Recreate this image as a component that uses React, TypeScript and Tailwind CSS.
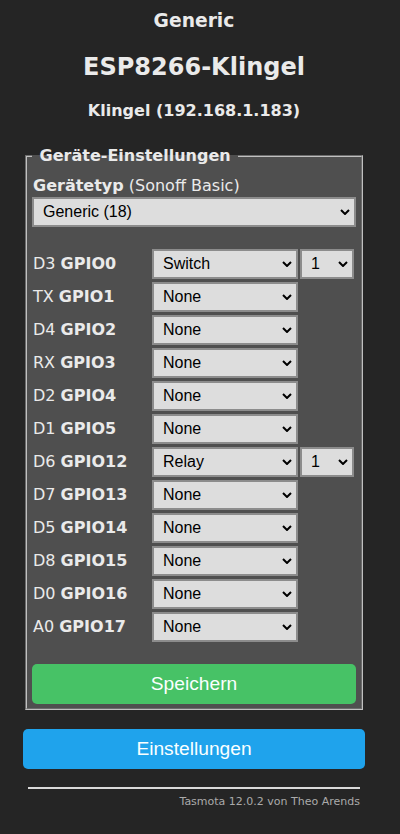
const gpios = [
  { pin: 'D3', name: 'GPIO0', value: 'Switch', index: '1' },
  { pin: 'TX', name: 'GPIO1', value: 'None' },
  { pin: 'D4', name: 'GPIO2', value: 'None' },
  { pin: 'RX', name: 'GPIO3', value: 'None' },
  { pin: 'D2', name: 'GPIO4', value: 'None' },
  { pin: 'D1', name: 'GPIO5', value: 'None' },
  { pin: 'D6', name: 'GPIO12', value: 'Relay', index: '1' },
  { pin: 'D7', name: 'GPIO13', value: 'None' },
  { pin: 'D5', name: 'GPIO14', value: 'None' },
  { pin: 'D8', name: 'GPIO15', value: 'None' },
  { pin: 'D0', name: 'GPIO16', value: 'None' },
  { pin: 'A0', name: 'GPIO17', value: 'None' },
];

const functions = ['None', 'Switch', 'Button', 'Relay', 'Led'];

// Native select, arrow drawn on top so it looks the same everywhere
const Select = ({ value, options, className }: { value: string; options: string[]; className: string }) => (
  <div className={`relative h-[30px] ${className}`}>
    <select
      defaultValue={value}
      className="h-full w-full appearance-none border-2 border-[#8c8c8c] bg-[#dddddd] pl-[9px] pr-5 text-[16px] text-black outline-none font-['Liberation_Sans',Arial,sans-serif]"
    >
      {options.map((o) => (
        <option key={o} value={o}>
          {o}
        </option>
      ))}
    </select>
    <svg
      className="pointer-events-none absolute right-[6px] top-1/2 -translate-y-1/2"
      width="10"
      height="6"
      viewBox="0 0 10 6"
      fill="none"
    >
      <path d="M1 1l4 4 4-4" stroke="#000" strokeWidth="2" />
    </svg>
  </div>
);

export default function App() {
  return (
    <div className="min-h-[834px] bg-[#252525] pl-[23px] text-[#eaeaea] font-['DejaVu_Sans',Verdana,sans-serif]">
      <div className="w-[342px] pt-[10px]">
        {/* Header */}
        <div className="text-center font-bold">
          <div className="text-[18.72px] leading-[22px]">Generic</div>
          <div className="mt-[21px] text-[24px] leading-[28px]">ESP8266-Klingel</div>
          <div className="mt-[20px] text-[16px] leading-[20px]">Klingel (192.168.1.183)</div>
        </div>

        <fieldset className="mx-[2px] mt-[25px] border-2 border-[#c0c0c0] bg-[#4f4f4f] px-[5px] pt-[10px] pb-[4px] [border-style:groove]">
          <legend className="px-[2px] text-[16px] font-bold leading-[20px]">{'\u00a0Geräte-Einstellungen\u00a0'}</legend>

          <div className="pl-px text-[16px] leading-[20px]">
            <b>Gerätetyp</b> (Sonoff Basic)
          </div>
          <Select value="Generic (18)" options={['Generic (18)', 'Sonoff Basic (1)']} className="mt-px w-full" />

          <div className="mt-[22px] flex flex-col gap-[3px]">
            {gpios.map((g) => (
              <div key={g.name} className="flex items-center">
                <div className="w-[120px] pl-px text-[16px] leading-[20px]">
                  {g.pin} <b>{g.name}</b>
                </div>
                <Select value={g.value} options={functions} className="w-[146px]" />
                {g.index && <Select value={g.index} options={['1', '2', '3', '4']} className="ml-[2px] w-[54px]" />}
              </div>
            ))}
          </div>

          <button className="mt-[22px] h-10 w-full rounded-[5px] bg-[#47c266] text-[19.2px] text-[#faffff] font-['Liberation_Sans',Arial,sans-serif]">
            Speichern
          </button>
        </fieldset>

        <button className="mt-[19px] h-10 w-full rounded-[5px] bg-[#1fa3ec] text-[19.2px] text-[#faffff] font-['Liberation_Sans',Arial,sans-serif]">
          Einstellungen
        </button>

        <div className="mx-[5px] mt-[18px] h-[2px] bg-[#dadada]" />
        <div className="mr-[5px] mt-[6px] text-right text-[11px] leading-[14px] text-[#aaaaaa]">
          Tasmota 12.0.2 von Theo Arends
        </div>
      </div>
    </div>
  );
}
